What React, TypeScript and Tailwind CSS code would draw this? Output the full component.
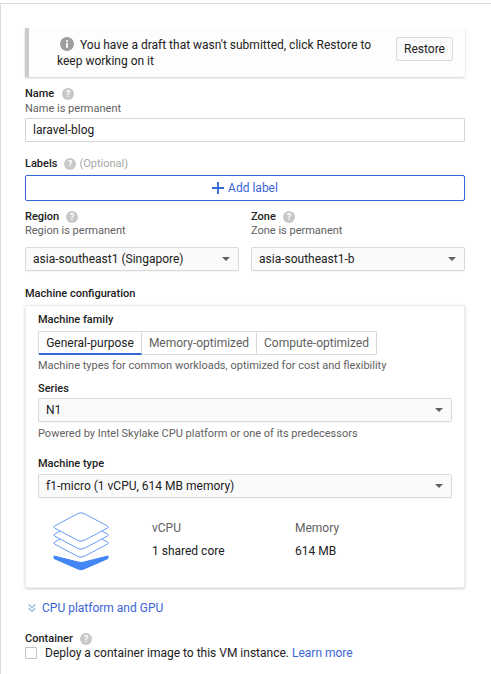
import React from "react";

const Help = ({ className = "" }: { className?: string }) => (
  <svg viewBox="0 0 24 24" className={`w-[12px] h-[12px] ${className}`}>
    <circle cx="12" cy="12" r="12" fill="#c8c8c8" />
    <text x="12" y="18" textAnchor="middle" fontSize="17" fontWeight="700" fill="#fff" fontFamily="Roboto, sans-serif">?</text>
  </svg>
);

const Caret = () => <span className="w-0 h-0 border-x-4 border-x-transparent border-t-[4px] border-t-[#616161]" />;

const Select = ({ value }: { value: string }) => (
  <div className="h-6 flex items-center justify-between pl-[7px] pr-[8px] border border-[#dadada] rounded-[2px] bg-[#fafafa] shadow-[0_1px_1px_rgba(0,0,0,0.04)] text-[12px] text-[#212121]">
    <span>{value}</span>
    <Caret />
  </div>
);

const Label = ({ children }: { children: React.ReactNode }) => (
  <div className="text-[11px] leading-[14px] font-medium text-[#212121]">{children}</div>
);

const Sub = ({ children }: { children: React.ReactNode }) => (
  <div className="text-[11px] leading-[14px] text-[#616161]">{children}</div>
);

const Stack = () => (
  <svg viewBox="0 0 56 59" className="w-[56px] h-[59px]">
    <path d="M1 44 L1 46.5 L25 57 Q28 58.5 31 57 L55 46.5 L55 44 L31 50 Q28 51 25 50 Z" fill="#4285f4" stroke="#4285f4" strokeWidth="1" strokeLinejoin="round" />
    <g fill="#fff" stroke="#6a9df5" strokeWidth="1" strokeLinejoin="round">
      <path d="M1.5 30 L25 17.5 Q28 16 31 17.5 L54.5 30 Q56 31 54.5 32 L31 44.5 Q28 46 25 44.5 L1.5 32 Q0 31 1.5 30 Z" />
      <path d="M1.5 22 L25 9.5 Q28 8 31 9.5 L54.5 22 Q56 23 54.5 24 L31 36.5 Q28 38 25 36.5 L1.5 24 Q0 23 1.5 22 Z" />
      <path d="M1.5 14 L25 1.5 Q28 0 31 1.5 L54.5 14 Q56 15 54.5 16 L31 28.5 Q28 30 25 28.5 L1.5 16 Q0 15 1.5 14 Z" />
    </g>
  </svg>
);

export default function App() {
  return (
    <div className="w-[491px] h-[674px] overflow-hidden bg-white pt-[3px] font-['Roboto',sans-serif]">
      <div className="h-full border-t border-l border-[#dcdcdc] pl-[24px] pr-[26px] pt-[24px]">
        {/* Draft banner */}
        <div className="h-[49px] flex items-center justify-between border-l-4 border-[#cccccc] bg-[#fdfdfd] shadow-[0_1px_2px_rgba(0,0,0,0.2)] pl-[28px] pr-[12px]">
          <div className="w-[320px] text-[12px] leading-[16px] text-[#212121]">
            <svg viewBox="0 0 24 24" className="inline-block w-[14px] h-[14px] ml-[3px] mr-[6px] align-[-2px]">
              <circle cx="12" cy="12" r="12" fill="#9e9e9e" />
              <rect x="10.4" y="10.5" width="3.2" height="8" fill="#fff" />
              <rect x="10.4" y="5.5" width="3.2" height="3.2" fill="#fff" />
            </svg>
            You have a draft that wasn't submitted, click Restore to keep working on it
          </div>
          <div className="mb-[7px] w-[57px] h-6 flex items-center justify-center border border-[#dadada] rounded-[2px] bg-[#fafafa] text-[12px] text-[#212121]">
            Restore
          </div>
        </div>

        {/* Name */}
        <div className="mt-[10px] flex items-center gap-[8px]">
          <Label>Name</Label>
          <Help className="mt-[-1px]" />
        </div>
        <div className="mt-px"><Sub>Name is permanent</Sub></div>
        <div className="mt-[2px] h-6 flex items-center px-[7px] border border-[#d4d4d4] rounded-[1px] text-[12px] text-[#212121]">
          laravel-blog
        </div>

        {/* Labels */}
        <div className="mt-[15px] flex items-center">
          <Label>Labels</Label>
          <Help className="ml-[7px]" />
          <span className="ml-[3px] text-[11px] leading-[14px] text-[#a8a8a8]">(Optional)</span>
        </div>
        <div className="mt-[4px] h-[26px] flex items-center justify-center gap-[4px] border border-[#3367d6] rounded-[2px] text-[12px] text-[#3b66d8]">
          <svg viewBox="0 0 12 12" className="w-[12px] h-[12px]">
            <path d="M6 0V12M0 6H12" stroke="#3367d6" strokeWidth="1.8" />
          </svg>
          Add label
        </div>

        {/* Region and zone */}
        <div className="mt-[9px] grid grid-cols-2 gap-x-[12px]">
          <div>
            <div className="flex items-center gap-[7px]"><Label>Region</Label><Help /></div>
            <Sub>Region is permanent</Sub>
            <div className="mt-[9px]"><Select value="asia-southeast1 (Singapore)" /></div>
          </div>
          <div>
            <div className="flex items-center gap-[7px]"><Label>Zone</Label><Help /></div>
            <Sub>Zone is permanent</Sub>
            <div className="mt-[9px]"><Select value="asia-southeast1-b" /></div>
          </div>
        </div>

        {/* Machine configuration */}
        <div className="mt-[16px]"><Label>Machine configuration</Label></div>
        <div className="mt-[4px] h-[283px] rounded-[2px] bg-white border border-[#ececec] shadow-[0_1px_3px_rgba(0,0,0,0.2)] pt-[7px] px-[12px]">
          <Label>Machine family</Label>
          <div className="mt-[4px] inline-flex h-6 text-[12px] border border-[#dadada] rounded-[1px] text-[#616161]">
            <div className="w-[103px] flex items-center justify-center text-[#212121] border-b-2 border-[#3367d6] border-r border-r-[#dadada] -mb-px">General-purpose</div>
            <div className="w-[115px] flex items-center justify-center border-r border-[#dadada]">Memory-optimized</div>
            <div className="w-[119px] flex items-center justify-center">Compute-optimized</div>
          </div>
          <div className="mt-[4px]"><Sub>Machine types for common workloads, optimized for cost and flexibility</Sub></div>
          <div className="mt-[9px]"><Label>Series</Label></div>
          <div className="mt-[2px]"><Select value="N1" /></div>
          <div className="mt-[5px]"><Sub>Powered by Intel Skylake CPU platform or one of its predecessors</Sub></div>
          <div className="mt-[16px]"><Label>Machine type</Label></div>
          <div className="mt-[3px]"><Select value="f1-micro (1 vCPU, 614 MB memory)" /></div>
          <div className="mt-[14px] flex">
            <div className="ml-[15px] w-[99px]"><Stack /></div>
            <div className="w-[143px] mt-[8px] text-[12px] leading-[16px]">
              <div className="text-[#616161]">vCPU</div>
              <div className="mt-[7px] text-[#212121]">1 shared core</div>
            </div>
            <div className="mt-[8px] text-[12px] leading-[16px]">
              <div className="text-[#616161]">Memory</div>
              <div className="mt-[7px] text-[#212121]">614 MB</div>
            </div>
          </div>
        </div>

        {/* CPU platform */}
        <div className="mt-[12px] flex items-center gap-[5px] text-[12px] leading-[16px] text-[#3b66d8]">
          <svg viewBox="0 0 12 12" className="ml-[2px] w-[10px] h-[10px]">
            <path d="M2 2L6 5.5L10 2M2 6.5L6 10L10 6.5" fill="none" stroke="#7aa0e8" strokeWidth="1.3" />
          </svg>
          CPU platform and GPU
        </div>

        {/* Container */}
        <div className="mt-[16px] flex items-center gap-[7px]">
          <Label>Container</Label>
          <Help />
        </div>
        <div className="-mt-px flex items-center gap-[8px] text-[12px] leading-[16px] text-[#212121]">
          <span className="w-3 h-3 border border-[#c4c4c4] rounded-[1px]" />
          <span>Deploy a container image to this VM instance. <span className="text-[#3b66d8]">Learn more</span></span>
        </div>
      </div>
    </div>
  );
}
